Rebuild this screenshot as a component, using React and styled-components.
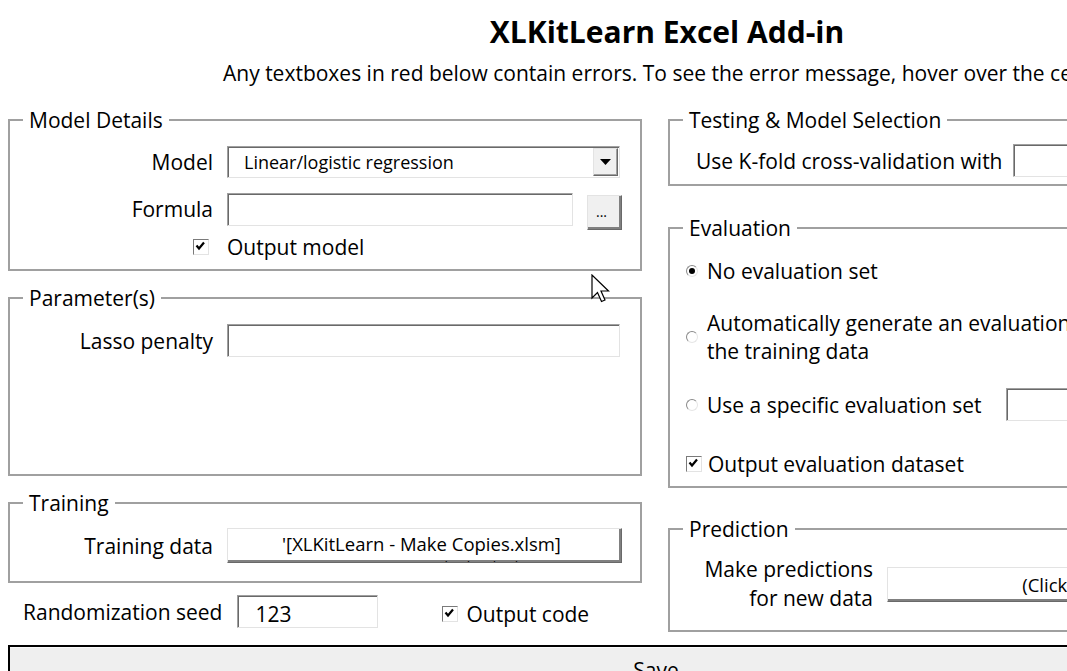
import React from 'react';
import styled, { createGlobalStyle } from 'styled-components';

const GlobalStyle = createGlobalStyle`
  html, body {
    margin: 0;
    padding: 0;
    background: #fff;
    overflow: hidden;
  }
  body {
    font-family: "Open Sans", Lato, "Liberation Sans", sans-serif;
    color: #000;
  }
`;

const Form = styled.div`
  position: relative;
  width: 1334px;
  height: 671px;
  overflow: hidden;
  background: #fff;
`;

const Title = styled.h1`
  margin: 14px 0 0;
  font-size: 30px;
  line-height: 36px;
  font-weight: 700;
  text-align: center;
`;

const Subtitle = styled.p`
  margin: 10px 0 0 223px;
  font-size: 21px;
  line-height: 26px;
  white-space: nowrap;
`;

const Columns = styled.div`
  display: grid;
  grid-template-columns: 634px 658px;
  column-gap: 26px;
  padding: 0 8px;
  margin-top: 22px;
  align-items: start;
`;

const Column = styled.div`
  display: flex;
  flex-direction: column;
`;

const Frame = styled.fieldset`
  margin: ${p => p.$mt || 0}px 0 0;
  padding: 0;
  border: 2px solid #a0a0a0;
  min-width: 0;
`;

const Legend = styled.legend`
  margin-left: 13px;
  padding: 0 6px;
  font-size: 21px;
  line-height: 24px;
`;

const FrameBody = styled.div`
  display: flex;
  flex-direction: column;
  padding: ${p => p.$pt || 14}px 0 ${p => p.$pb || 10}px ${p => p.$pl || 0}px;
  min-height: ${p => p.$minH || 0}px;
  box-sizing: border-box;
`;

const Row = styled.div`
  display: grid;
  grid-template-columns: 203px 1fr;
  column-gap: 14px;
  align-items: ${p => p.$align || 'center'};
  margin-top: ${p => p.$mt || 0}px;
`;

const Label = styled.span`
  font-size: 21px;
  line-height: ${p => p.$lh || 24}px;
  text-align: right;
  white-space: nowrap;
`;

const Controls = styled.div`
  display: flex;
  align-items: flex-start;
  gap: 14px;
`;

const TextBox = styled.div`
  box-sizing: border-box;
  width: ${p => p.$w}px;
  height: 33px;
  background: #fff;
  border: 1px solid;
  border-color: #a0a0a0 #e3e3e3 #e3e3e3 #a0a0a0;
  box-shadow: inset 1px 1px 0 #696969;
  font-size: 21px;
  line-height: 36px;
  padding-left: 17px;
  flex: none;
`;

const Select = styled(TextBox)`
  display: flex;
  align-items: center;
  justify-content: space-between;
  height: 32px;
  padding: 0 0 0 16px;
  font-size: 18px;
  line-height: 22px;
`;

const DropButton = styled.span`
  box-sizing: border-box;
  width: 25px;
  height: 28px;
  margin-right: 1px;
  display: flex;
  align-items: center;
  justify-content: center;
  background: #f0f0f0;
  border: 1px solid;
  border-color: #e3e3e3 #696969 #696969 #e3e3e3;
  box-shadow: inset -1px -1px 0 #a0a0a0;
`;

const RaisedButton = styled.div`
  box-sizing: border-box;
  width: ${p => p.$w}px;
  height: 35px;
  margin-top: ${p => p.$mt || 0}px;
  background: ${p => p.$bg || '#fff'};
  border: 1px solid;
  border-color: #e3e3e3 #696969 #696969 #e3e3e3;
  box-shadow: inset -2px -2px 0 #808080;
  font-size: ${p => p.$fs || 18.5}px;
  line-height: ${p => p.$lh || 22}px;
  text-align: center;
  overflow: hidden;
  padding: ${p => p.$pt || 4}px 6px 0 0;
  flex: none;
`;

const CheckBox = styled.span`
  box-sizing: border-box;
  width: 16px;
  height: 16px;
  display: inline-block;
  background: #fff;
  border: 1px solid;
  border-color: #7a7a7a #e3e3e3 #e3e3e3 #7a7a7a;
  flex: none;
  svg {
    display: block;
  }
`;

const CheckCell = styled.div`
  display: flex;
  justify-content: flex-end;
  padding-right: 4px;
`;

const OptionText = styled.span`
  font-size: 21px;
  line-height: 28px;
  white-space: nowrap;
`;

const SeedRow = styled.div`
  display: flex;
  align-items: center;
  margin-top: 12px;
  padding-left: 15px;
`;

const SeedCheck = styled.div`
  display: flex;
  align-items: center;
  gap: 8px;
  margin-left: 64px;
  margin-top: 4px;
`;

const SaveButton = styled.div`
  margin: 13px 8px 0;
  height: 40px;
  box-sizing: border-box;
  background: #efefef;
  border-top: 2px solid #000;
  border-left: 2px solid #000;
  box-shadow: inset 0 1px 0 #fafafa;
  text-align: center;
  font-size: 21px;
  line-height: 24px;
  padding: 11px 24px 0 0;
`;

const InlineRow = styled.div`
  display: flex;
  align-items: center;
  gap: ${p => p.$gap || 10}px;
  margin-top: ${p => p.$mt || 0}px;
`;

const Radio = styled.span`
  box-sizing: border-box;
  position: relative;
  width: 12px;
  height: 12px;
  border-radius: 50%;
  border: 1px solid;
  border-color: #8a8a8a #e6e6e6 #e6e6e6 #8a8a8a;
  background: #fff;
  flex: none;
  &::after {
    content: '';
    display: ${p => (p.$on ? 'block' : 'none')};
    position: absolute;
    left: 2px;
    top: 2px;
    width: 6px;
    height: 6px;
    border-radius: 50%;
    background: #000;
  }
`;

const Cursor = styled.svg`
  position: absolute;
  left: 591px;
  top: 274px;
`;

const Tick = () => (
  <svg width="14" height="14" viewBox="0 0 14 14">
    <path d="M2.5 5.5 L5 8.5 L10 2.5" fill="none" stroke="#000" strokeWidth="2.2" />
  </svg>
);

const Check = () => (
  <CheckBox>
    <Tick />
  </CheckBox>
);

export default function App() {
  return (
    <Form>
      <GlobalStyle />
      <Title>XLKitLearn Excel Add-in</Title>
      <Subtitle>
        Any textboxes in red below contain errors. To see the error message, hover over the cell with your mouse.
      </Subtitle>

      <Columns>
        <Column>
          <Frame>
            <Legend>Model Details</Legend>
            <FrameBody $pb={8}>
              <Row>
                <Label>Model</Label>
                <Controls>
                  <Select $w={393}>
                    Linear/logistic regression
                    <DropButton>
                      <svg width="11" height="6" viewBox="0 0 11 6">
                        <path d="M0 0 H11 L5.5 6 Z" fill="#000" />
                      </svg>
                    </DropButton>
                  </Select>
                </Controls>
              </Row>
              <Row $mt={15} $align="start">
                <Label $lh={33}>Formula</Label>
                <Controls>
                  <TextBox $w={346} />
                  <RaisedButton $w={35} $bg="#f0f0f0" $mt={2} $fs={14} $pt={5}>...</RaisedButton>
                </Controls>
              </Row>
              <Row $mt={3}>
                <CheckCell>
                  <Check />
                </CheckCell>
                <OptionText>Output model</OptionText>
              </Row>
            </FrameBody>
          </Frame>

          <Frame $mt={15}>
            <Legend>Parameter(s)</Legend>
            <FrameBody $minH={164}>
              <Row>
                <Label>Lasso penalty</Label>
                <Controls>
                  <TextBox $w={393} />
                </Controls>
              </Row>
            </FrameBody>
          </Frame>

          <Frame $mt={15}>
            <Legend>Training</Legend>
            <FrameBody $pt={13} $pb={18}>
              <Row>
                <Label>Training data</Label>
                <Controls>
                  <RaisedButton $w={395} $lh={24} $pt={3}>
                    '[XLKitLearn - Make Copies.xlsm]
                    <br />
                    Linear Regression'!$A$1:$K$1001
                  </RaisedButton>
                </Controls>
              </Row>
            </FrameBody>
          </Frame>

          <SeedRow>
            <Label>Randomization seed</Label>
            <TextBox $w={141} style={{ marginLeft: 15 }}>123</TextBox>
            <SeedCheck>
              <Check />
              <OptionText>Output code</OptionText>
            </SeedCheck>
          </SeedRow>
        </Column>

        <Column>
          <Frame>
            <Legend>Testing &amp; Model Selection</Legend>
            <FrameBody $pl={26} $pt={12} $pb={7}>
              <InlineRow $gap={10}>
                <OptionText>Use K-fold cross-validation with</OptionText>
                <TextBox $w={120} />
                <OptionText>folds</OptionText>
              </InlineRow>
            </FrameBody>
          </Frame>

          <Frame $mt={30}>
            <Legend>Evaluation</Legend>
            <FrameBody $pl={16} $pt={17} $pb={8}>
              <InlineRow $gap={9}>
                <Radio $on />
                <OptionText>No evaluation set</OptionText>
              </InlineRow>
              <InlineRow $gap={9} $mt={24}>
                <Radio />
                <OptionText>
                  Automatically generate an evaluation set from
                  <br />
                  the training data
                </OptionText>
              </InlineRow>
              <InlineRow $gap={9} $mt={23}>
                <Radio />
                <OptionText>Use a specific evaluation set</OptionText>
                <TextBox $w={300} style={{ marginLeft: 16 }} />
              </InlineRow>
              <InlineRow $gap={6} $mt={29}>
                <Check />
                <OptionText>Output evaluation dataset</OptionText>
              </InlineRow>
            </FrameBody>
          </Frame>

          <Frame $mt={29}>
            <Legend>Prediction</Legend>
            <FrameBody $pt={14} $pb={17}>
              <Row>
                <Label $lh={29}>
                  Make predictions
                  <br />
                  for new data
                </Label>
                <Controls>
                  <RaisedButton $w={404} $pt={6}>(Click to select)</RaisedButton>
                </Controls>
              </Row>
            </FrameBody>
          </Frame>
        </Column>
      </Columns>

      <SaveButton>Save</SaveButton>

      <Cursor width="20" height="30" viewBox="0 0 20 30">
        <path
          d="M1 1 L1 24 L6.5 18.5 L10.5 27.5 L14 26 L10 17 L17.5 17 Z"
          fill="#fff"
          stroke="#000"
          strokeWidth="1.2"
          strokeLinejoin="miter"
        />
      </Cursor>
    </Form>
  );
}
